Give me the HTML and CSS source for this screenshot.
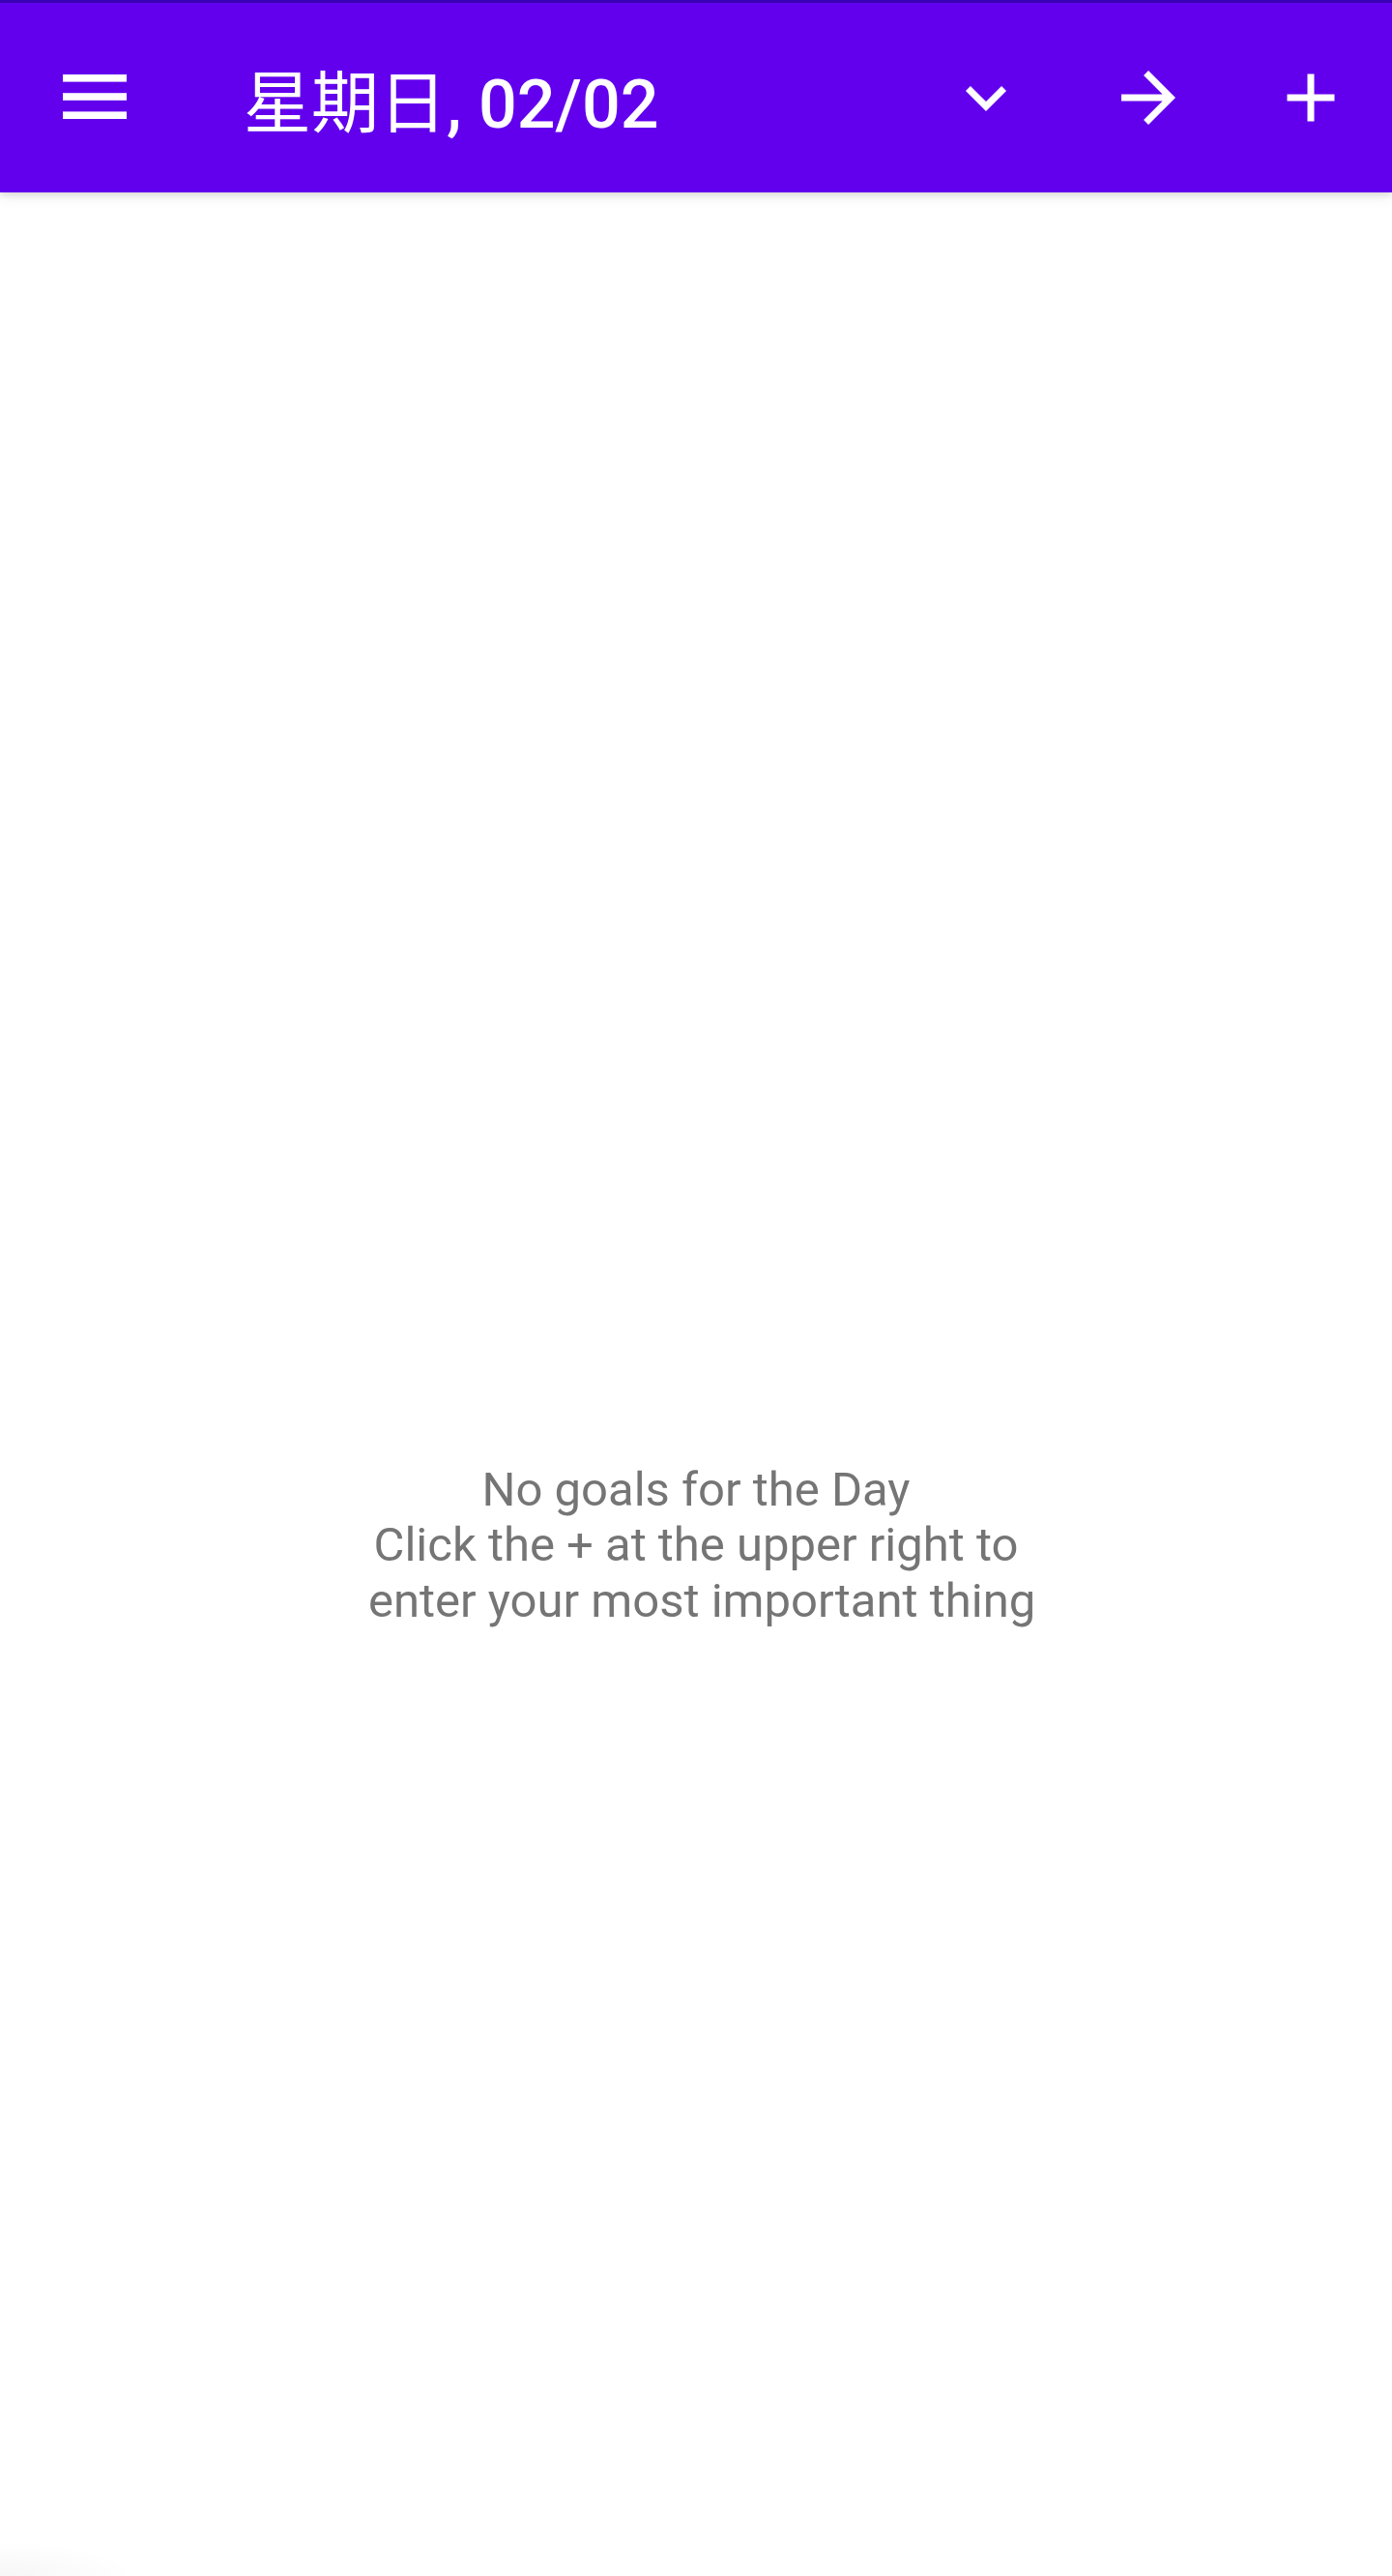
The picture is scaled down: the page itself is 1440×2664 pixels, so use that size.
FILE: index.html
```html
<!DOCTYPE html>
<html lang="en">
<head>
<meta charset="utf-8">
<title>Goals</title>
<link rel="stylesheet" href="styles.css">
</head>
<body>
<div class="screen">
  <header class="appbar">
    <div class="status-edge"></div>
    <div class="toolbar">
      <button class="nav-btn" aria-label="Menu">
        <svg class="menu-icon" width="66" height="46" viewBox="0 0 66 46">
          <rect x="0" y="0" width="66" height="7.6" fill="#fff"/>
          <rect x="0" y="19.2" width="66" height="7.6" fill="#fff"/>
          <rect x="0" y="38.4" width="66" height="7.6" fill="#fff"/>
        </svg>
      </button>
      <h1 class="title"><span class="cjk">星期日</span>, 02/02</h1>
      <div class="actions">
        <button class="action-btn" aria-label="Expand">
          <svg width="84" height="84" viewBox="0 0 24 24"><path fill="#fff" d="M16.59 8.59L12 13.17 7.41 8.59 6 10l6 6 6-6z"/></svg>
        </button>
        <button class="action-btn" aria-label="Next day">
          <svg width="84" height="84" viewBox="0 0 24 24"><path fill="#fff" d="M12 4l-1.41 1.41L16.17 11H4v2h12.17l-5.58 5.59L12 20l8-8z"/></svg>
        </button>
        <button class="action-btn" aria-label="Add">
          <svg width="84" height="84" viewBox="0 0 24 24"><path fill="#fff" d="M19 13h-6v6h-2v-6H5v-2h6V5h2v6h6v2z"/></svg>
        </button>
      </div>
    </div>
  </header>
  <main class="content">
    <p class="empty">No goals for the Day<br>Click the + at the upper right to<br>&nbsp;enter your most important thing</p>
  </main>
  <div class="corner-shade"></div>
</div>
</body>
</html>
```

FILE: styles.css
```css
html, body {
  margin: 0;
  padding: 0;
  background: #ffffff;
}

.screen {
  position: relative;
  width: 1440px;
  height: 2664px;
  overflow: hidden;
  background: #ffffff;
  font-family: Roboto, "Noto Sans", "Noto Sans CJK SC", sans-serif;
}

.appbar {
  position: relative;
  z-index: 2;
  background: #6200ee;
  box-shadow: 0 3px 6px rgba(0, 0, 0, 0.10), 0 6px 14px rgba(0, 0, 0, 0.06);
}

.status-edge {
  height: 3px;
  background: #3a00b4;
}

.toolbar {
  height: 196px;
  display: flex;
  align-items: center;
}

.nav-btn,
.action-btn {
  border: 0;
  padding: 0;
  margin: 0;
  background: transparent;
  display: flex;
  align-items: center;
  justify-content: center;
  height: 196px;
}

.nav-btn {
  width: 196px;
}

.menu-icon {
  margin-bottom: 3px;
}

.title {
  margin: 0 0 0 56px;
  padding-top: 8px;
  flex: 1;
  color: #ffffff;
  font-family: Roboto, "Noto Sans CJK SC", sans-serif;
  font-weight: 500;
  font-size: 70px;
  line-height: 70px;
  white-space: nowrap;
}

.cjk {
  font-family: "Noto Sans CJK SC", sans-serif;
  font-weight: 400;
}

.actions {
  display: flex;
}

.action-btn {
  width: 168px;
}

.action-btn svg {
  display: block;
}

.content {
  padding-top: 1313px;
}

.empty {
  margin: 0;
  text-align: center;
  color: #757575;
  font-family: Roboto, "Noto Sans", sans-serif;
  font-size: 49px;
  line-height: 57.4px;
}

.corner-shade {
  position: absolute;
  left: 0;
  bottom: 0;
  width: 160px;
  height: 40px;
  background: radial-gradient(ellipse 140px 36px at 0 100%, rgba(0, 0, 0, 0.035), rgba(0, 0, 0, 0) 100%);
  pointer-events: none;
}
```
